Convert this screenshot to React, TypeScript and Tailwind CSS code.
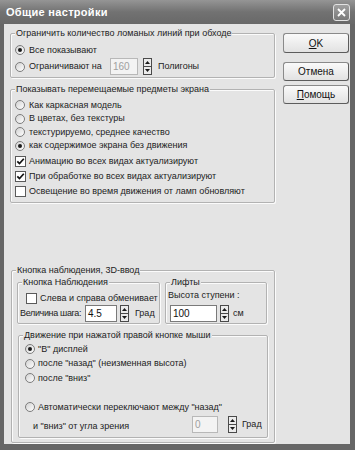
import type { ReactNode } from "react";

function Radio({ on }: { on?: boolean }) {
  return (
    <span className="flex h-[10px] w-[10px] shrink-0 items-center justify-center rounded-full border border-[#7c7c7c] bg-gradient-to-br from-[#d2d2d2] to-white">
      {on && <span className="h-[4px] w-[4px] rounded-full bg-[#1a1a1a]" />}
    </span>
  );
}

function Check({ on }: { on?: boolean }) {
  return (
    <span className="flex h-[11px] w-[11px] shrink-0 items-center justify-center border border-[#5a5a5a] bg-white">
      {on && (
        <svg width="9" height="9" viewBox="0 0 9 9">
          <path d="M1.3 4.3 L3.5 6.6 L7.8 1.8" stroke="#111" strokeWidth="1.7" fill="none" />
        </svg>
      )}
    </span>
  );
}

function Spin() {
  return (
    <span className="flex h-[17px] w-[9px] shrink-0 flex-col border border-[#4a4a4a] bg-[#ececec]">
      <span className="flex flex-1 items-center justify-center border-b border-[#4a4a4a]">
        <svg width="5" height="3" viewBox="0 0 5 3">
          <path d="M0 3 L2.5 0 L5 3Z" fill="#1a1a1a" />
        </svg>
      </span>
      <span className="flex flex-1 items-center justify-center">
        <svg width="5" height="3" viewBox="0 0 5 3">
          <path d="M0 0 L2.5 3 L5 0Z" fill="#1a1a1a" />
        </svg>
      </span>
    </span>
  );
}

function Field({ value, w, off }: { value: string; w: string; off?: boolean }) {
  return (
    <span
      className={`flex h-[17px] ${w} shrink-0 items-center border px-[2px] text-[10px] ${
        off ? "border-[#b8b8b8] bg-[#f3f3f3] text-[#a0a0a0]" : "border-[#7a7a7a] bg-white text-[#111]"
      }`}
    >
      {value}
    </span>
  );
}

function Group({ label, className, children }: { label: string; className: string; children: ReactNode }) {
  return (
    <div
      className={`relative flex flex-col rounded-[2px] border border-[#b2b2b2] shadow-[inset_1px_1px_0_#fbfbfb,1px_1px_0_#fbfbfb] ${className}`}
    >
      <span className="absolute -top-[7px] left-[4px] bg-[#e4e4e4] px-[1px] leading-[12px]">{label}</span>
      {children}
    </div>
  );
}

function Btn({ children, h }: { children: ReactNode; h: string }) {
  return (
    <div
      className={`flex ${h} w-[66px] items-center justify-center rounded-[3px] border border-[#8a8a8a] border-b-[#5c5c5c] border-r-[#5c5c5c] bg-gradient-to-b from-[#fafafa] to-[#e2e2e2] text-[10px] text-[#111]`}
    >
      {children}
    </div>
  );
}

export default function App() {
  return (
    <div className="flex h-[450px] w-[355px] flex-col whitespace-nowrap bg-[#666666] pb-[6px] font-['Liberation_Sans',Arial,sans-serif] text-[9px] leading-[11px] text-[#222]">
      <div className="flex h-[24px] shrink-0 items-center justify-between bg-gradient-to-b from-[#959595] via-[#727272] to-[#686868] pl-[6px] pr-[5px]">
        <span className="text-[11px] font-bold tracking-[0.3px] text-white">Общие настройки</span>
        <span className="flex h-[17px] w-[17px] items-center justify-center rounded-[3px] border border-[#e2e2e2] bg-gradient-to-b from-[#a0a0a0] to-[#7a7a7a]">
          <svg width="9" height="9" viewBox="0 0 9 9">
            <path d="M1 1 L8 8 M8 1 L1 8" stroke="#fff" strokeWidth="1.8" />
          </svg>
        </span>
      </div>

      <div className="ml-[4px] mr-[5px] flex flex-1 items-start bg-[#e4e4e4]">
        <div className="ml-[6px] flex w-[265px] flex-col pt-[9px]">
          <Group label="Ограничить количество ломаных линий при обходе" className="pl-[4px] pt-[8px] pb-[2px]">
            <div className="flex h-[16px] items-center">
              <Radio on />
              <span className="ml-[4px]">Все показывают</span>
            </div>
            <div className="flex h-[17px] items-center">
              <Radio />
              <span className="ml-[4px] w-[81px] shrink-0">Ограничивают на</span>
              <Field value="160" w="w-[28px]" off />
              <span className="ml-[5px]">
                <Spin />
              </span>
              <span className="ml-[6px]">Полигоны</span>
            </div>
          </Group>

          <Group label="Показывать перемещаемые предметы экрана" className="mt-[11px] pl-[4px] pt-[8px] pb-[3px]">
            <div className="flex h-[14px] items-center">
              <Radio />
              <span className="ml-[4px]">Как каркасная модель</span>
            </div>
            <div className="flex h-[13px] items-center">
              <Radio />
              <span className="ml-[4px]">В цветах, без текстуры</span>
            </div>
            <div className="flex h-[14px] items-center">
              <Radio />
              <span className="ml-[4px]">текстурируемо, среднее качество</span>
            </div>
            <div className="flex h-[13px] items-center">
              <Radio on />
              <span className="ml-[4px]">как содержимое экрана без движения</span>
            </div>
            <div className="mt-[2px] flex h-[15px] items-center">
              <Check on />
              <span className="ml-[3px]">Анимацию во всех видах актуализируют</span>
            </div>
            <div className="flex h-[15px] items-center">
              <Check on />
              <span className="ml-[3px]">При обработке во всех видах актуализируют</span>
            </div>
            <div className="flex h-[15px] items-center">
              <Check />
              <span className="ml-[3px]">Освещение во время движения от ламп обновляют</span>
            </div>
          </Group>

          <Group label="Кнопка наблюдения, 3D-ввод" className="ml-[1px] mt-[67px] w-[264px] pt-[11px] pb-[4px]">
            <div className="flex">
              <Group label="Кнопка Наблюдения" className="ml-[5px] w-[143px] pt-[8px] pb-[1px]">
                <div className="flex h-[14px] items-center pl-[8px]">
                  <Check />
                  <span className="ml-[3px]">Слева и справа обменивает</span>
                </div>
                <div className="flex h-[17px] items-center pl-[2px]">
                  <span className="w-[65px] shrink-0 tracking-[-0.35px]">Величина шага:</span>
                  <Field value="4.5" w="w-[32px]" />
                  <span className="ml-[3px]">
                    <Spin />
                  </span>
                  <span className="ml-[6px]">Град</span>
                </div>
              </Group>
              <Group label="Лифты" className="ml-[5px] w-[102px] pt-[5px] pb-[1px]">
                <div className="flex h-[14px] items-center pl-[2px]">Высота ступени :</div>
                <div className="mt-[3px] flex h-[17px] items-center pl-[4px]">
                  <Field value="100" w="w-[47px]" />
                  <span className="ml-[3px]">
                    <Spin />
                  </span>
                  <span className="ml-[4px]">см</span>
                </div>
              </Group>
            </div>

            <Group label="Движение при нажатой правой кнопке мыши" className="ml-[6px] mt-[11px] w-[250px] pl-[6px] pt-[6px] pb-[4px]">
              <div className="flex h-[14px] items-center">
                <Radio on />
                <span className="ml-[3px]">"В" дисплей</span>
              </div>
              <div className="flex h-[15px] items-center">
                <Radio />
                <span className="ml-[3px]">после "назад" (неизменная высота)</span>
              </div>
              <div className="flex h-[14px] items-center">
                <Radio />
                <span className="ml-[3px]">после "вниз"</span>
              </div>
              <div className="mt-[15px] flex h-[14px] items-center">
                <Radio />
                <span className="ml-[3px]">Автоматически переключают между "назад"</span>
              </div>
              <div className="mt-[2px] flex h-[17px] items-center pl-[8px]">
                <span className="w-[159px] shrink-0 pt-[4px]">и "вниз" от угла зрения</span>
                <Field value="0" w="w-[26px]" off />
                <span className="ml-[10px]">
                  <Spin />
                </span>
                <span className="ml-[5px]">Град</span>
              </div>
            </Group>
          </Group>
        </div>

        <div className="ml-[8px] flex w-[66px] flex-col pt-[9px]">
          <Btn h="h-[20px]">
            <span>
              <span className="underline">O</span>K
            </span>
          </Btn>
          <div className="mt-[9px]">
            <Btn h="h-[19px]">Отмена</Btn>
          </div>
          <div className="mt-[4px]">
            <Btn h="h-[19px]">
              <span>
                <span className="underline">П</span>омощь
              </span>
            </Btn>
          </div>
        </div>
      </div>
    </div>
  );
}
